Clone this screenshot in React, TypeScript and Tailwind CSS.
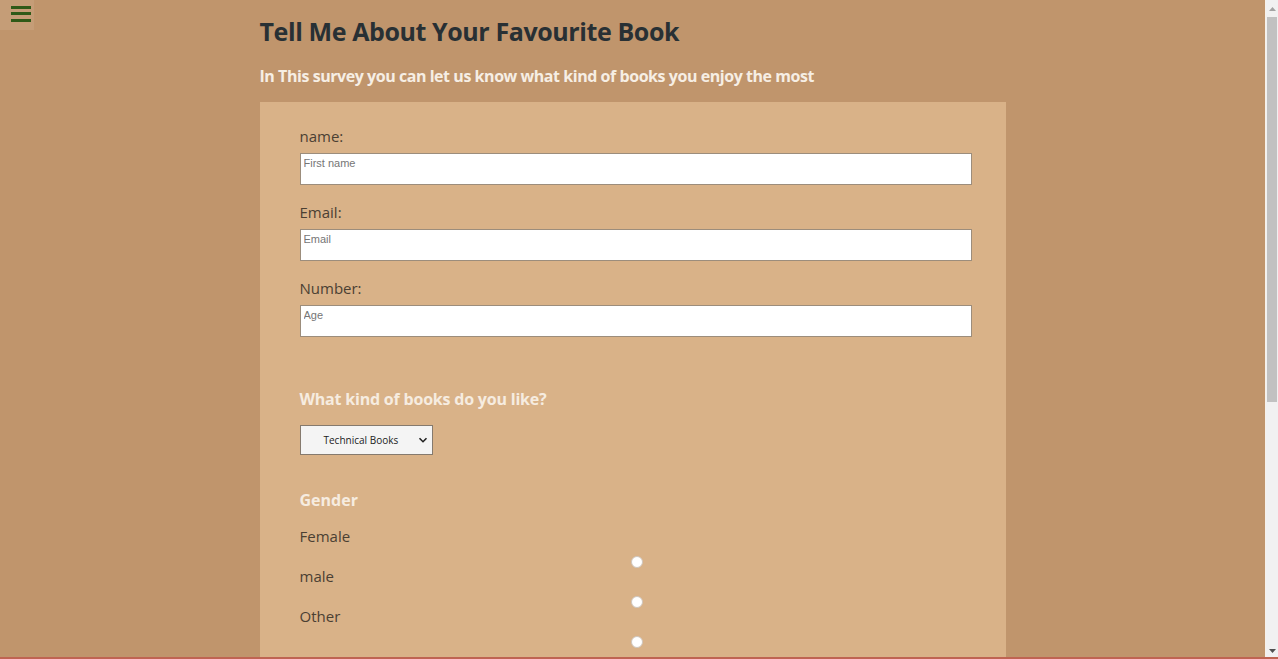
import React from "react";

const font = { fontFamily: '"Open Sans", "Noto Sans", Arial, sans-serif' };
const inputFont = { fontFamily: '"Liberation Sans", Arial, sans-serif' };

function Field({ label, placeholder }: { label: string; placeholder: string }) {
  return (
    <div>
      <label className="block text-[15px] leading-[20px] text-[#4b4033] mb-[6px] -translate-y-[1px]">{label}</label>
      <input
        placeholder={placeholder}
        style={inputFont}
        className="block w-[672px] h-[32px] bg-white border border-[#9c8d7c] px-[3px] pt-[1px] pb-[14px] text-[11px] leading-[14px] placeholder:text-[#767676] outline-none mb-[18px]"
      />
    </div>
  );
}

function Radio({ label }: { label: string }) {
  return (
    <div>
      <div className="text-[15px] leading-[20px] text-[#4b4033]">{label}</div>
      <div className="h-[20px] pt-[10px] flex justify-center">
        <span className="ml-[2px] block w-[12px] h-[12px] rounded-full bg-white border border-[#cfc6bd]" />
      </div>
    </div>
  );
}

export default function App() {
  return (
    <div className="min-h-screen bg-[#c0956c] pr-[13px]" style={font}>
      <button className="fixed top-0 left-0 w-[34px] h-[30px] bg-[#c59d77] flex flex-col pt-[6px] pl-[11px]">
        <span className="block w-[20px] h-[3px] bg-[#2f5a18]" />
        <span className="block w-[20px] h-[3px] bg-[#2f5a18] mt-[3px]" />
        <span className="block w-[20px] h-[3px] bg-[#2f5a18] mt-[4px]" />
      </button>

      {/* window scrollbar */}
      <div className="fixed top-0 right-0 w-[13px] h-screen bg-[#f1f1f1] border-l border-[#f7f1ea] flex flex-col items-center">
        <div className="h-[17px] flex items-center justify-center">
          <svg width="7" height="4" viewBox="0 0 7 4"><path d="M0 4 L3.5 0 L7 4 Z" fill="#a3a3a3" /></svg>
        </div>
        <div className="w-[10px] h-[385px] bg-[#c1c1c1]" />
        <div className="flex-1" />
        <div className="h-[17px] flex items-center justify-center">
          <svg width="7" height="4" viewBox="0 0 7 4"><path d="M0 0 L3.5 4 L7 0 Z" fill="#505050" /></svg>
        </div>
      </div>
      <div className="fixed bottom-0 left-0 right-0 h-[2px] bg-[#bf6452]" />

      <div className="w-[746px] mx-auto pt-[15px] pb-[40px]">
        <h1 className="text-[25px] leading-[32px] font-bold text-[#283034] tracking-[-0.4px]">
          Tell Me About Your Favourite Book
        </h1>
        <p className="mt-[19px] text-[16px] leading-[20px] font-bold text-[#f6eee4] tracking-[-0.45px]">
          In This survey you can let us know what kind of books you enjoy the most
        </p>
        <form className="mt-[16px] bg-[#d9b288] pt-[25px] pl-[40px] pr-[34px] pb-[60px]">
          <Field label="name:" placeholder="First name" />
          <Field label="Email:" placeholder="Email" />
          <Field label="Number:" placeholder="Age" />

          <h2 className="mt-[52px] text-[16px] leading-[20px] font-bold text-[#f6ece0] tracking-[-0.2px]">
            What kind of books do you like?
          </h2>
          <div className="mt-[16px] w-[133px] h-[30px] bg-[#f4f4f4] border border-[#857a6e] flex items-center text-[10px] text-[#222]">
            <span className="pl-[23px] flex-1">Technical Books</span>
            <svg width="10" height="10" viewBox="0 0 10 10" className="mr-[4px]">
              <path d="M1.5 3.2 L5 6.7 L8.5 3.2" stroke="#222" strokeWidth="1.6" fill="none" />
            </svg>
          </div>

          <h2 className="mt-[35px] text-[16px] leading-[20px] font-bold text-[#f6ece0]">Gender</h2>
          <div className="mt-[16px]">
            <Radio label="Female" />
            <Radio label="male" />
            <Radio label="Other" />
          </div>

          <h2 className="mt-[40px] text-[16px] leading-[20px] font-bold text-[#f6ece0]">
            Which genres do you prefer?
          </h2>
          <div className="mt-[16px] flex flex-col gap-[12px] text-[15px] leading-[20px] text-[#4b4033]">
            <label className="flex items-center gap-[8px]"><input type="checkbox" /> Fiction</label>
            <label className="flex items-center gap-[8px]"><input type="checkbox" /> Biography</label>
            <label className="flex items-center gap-[8px]"><input type="checkbox" /> History</label>
          </div>

          <h2 className="mt-[40px] text-[16px] leading-[20px] font-bold text-[#f6ece0]">
            Any comments?
          </h2>
          <textarea className="mt-[16px] block w-[672px] h-[90px] bg-white border border-[#9c8d7c] p-[3px] text-[11px]" placeholder="Comments" />
          <button type="button" className="mt-[24px] w-[120px] h-[34px] bg-[#283034] text-white text-[14px] font-bold">
            Submit
          </button>
        </form>
      </div>
    </div>
  );
}
